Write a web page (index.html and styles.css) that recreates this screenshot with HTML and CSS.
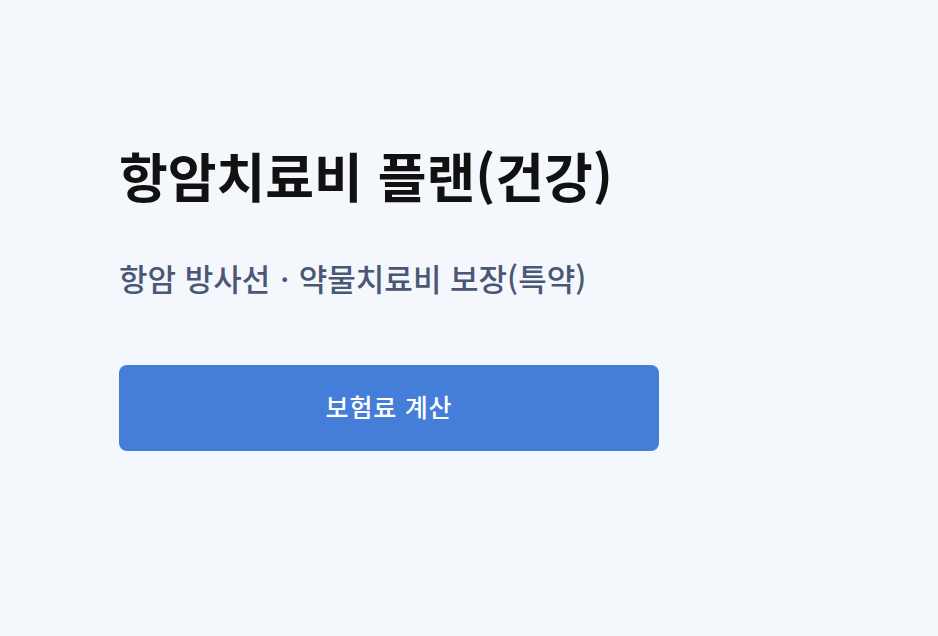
FILE: index.html
```html
<!DOCTYPE html>
<html lang="ko">
<head>
<meta charset="utf-8">
<link rel="stylesheet" href="styles.css">
</head>
<body>
<main class="page">
  <h1 class="title">항암치료비 플랜(건강)</h1>
  <p class="subtitle">항암 방사선ㆍ약물치료비 보장(특약)</p>
  <button class="calc-btn" type="button">보험료 계산</button>
</main>
</body>
</html>
```

FILE: styles.css
```css
html, body {
  margin: 0;
  padding: 0;
  background: #f4f8fc;
}
body {
  font-family: "Noto Sans CJK KR", "Noto Sans", sans-serif;
  width: 938px;
  height: 636px;
  overflow: hidden;
}
.page {
  padding: 143px 0 0 119px;
  display: flex;
  flex-direction: column;
  align-items: flex-start;
}
.title {
  margin: 0;
  font-size: 53px;
  font-weight: 700;
  color: #111111;
  line-height: 64px;
  letter-spacing: 0;
}
.subtitle {
  margin: 51px 0 0;
  font-size: 31px;
  font-weight: 500;
  color: #4a5775;
  line-height: 40px;
  letter-spacing: 0;
}
.calc-btn {
  margin-top: 67px;
  width: 540px;
  height: 86px;
  padding: 0 0 5px;
  border: none;
  border-radius: 8px;
  background: #457ed8;
  color: #ffffff;
  font-family: inherit;
  font-size: 25px;
  font-weight: 500;
  letter-spacing: 0.8px;
}
```
